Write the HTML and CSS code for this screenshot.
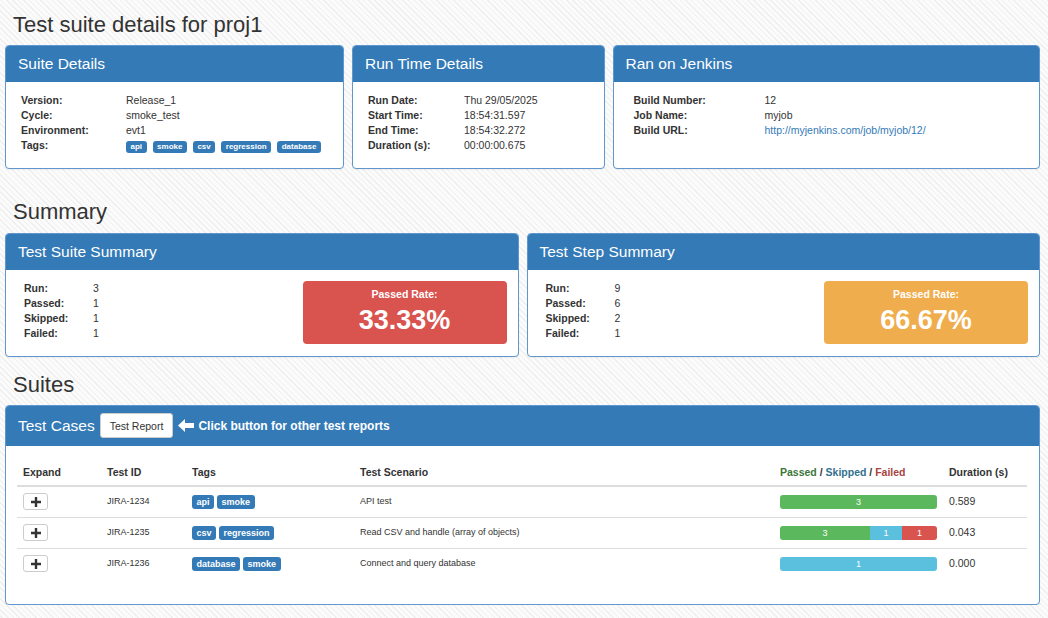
FILE: index.html
```html
<!DOCTYPE html>
<html lang="en">
<head>
<meta charset="utf-8">
<title>Test suite details for proj1</title>
<link rel="stylesheet" href="styles.css">
</head>
<body>
<div class="page">
  <h1 class="page-title">Test suite details for proj1</h1>

  <div class="row">
    <section class="panel panel-suite">
      <div class="panel-heading"><h2 class="panel-title">Suite Details</h2></div>
      <div class="panel-body body-suite">
        <dl class="info info-suite">
          <dt>Version:</dt><dd>Release_1</dd>
          <dt>Cycle:</dt><dd>smoke_test</dd>
          <dt>Environment:</dt><dd>evt1</dd>
          <dt>Tags:</dt>
          <dd class="tags tags-suite">
            <span class="tag tag-xs">api</span>
            <span class="tag tag-xs">smoke</span>
            <span class="tag tag-xs">csv</span>
            <span class="tag tag-xs">regression</span>
            <span class="tag tag-xs">database</span>
          </dd>
        </dl>
      </div>
    </section>

    <section class="panel panel-runtime">
      <div class="panel-heading"><h2 class="panel-title">Run Time Details</h2></div>
      <div class="panel-body body-runtime">
        <dl class="info info-runtime">
          <dt>Run Date:</dt><dd>Thu 29/05/2025</dd>
          <dt>Start Time:</dt><dd>18:54:31.597</dd>
          <dt>End Time:</dt><dd>18:54:32.272</dd>
          <dt>Duration (s):</dt><dd>00:00:00.675</dd>
        </dl>
      </div>
    </section>

    <section class="panel panel-jenkins">
      <div class="panel-heading"><h2 class="panel-title">Ran on Jenkins</h2></div>
      <div class="panel-body body-jenkins">
        <dl class="info info-jenkins">
          <dt>Build Number:</dt><dd>12</dd>
          <dt>Job Name:</dt><dd>myjob</dd>
          <dt>Build URL:</dt><dd><a class="link" href="#">http://myjenkins.com/job/myjob/12/</a></dd>
        </dl>
      </div>
    </section>
  </div>

  <h1 class="section-title title-summary">Summary</h1>

  <div class="row">
    <section class="panel panel-half">
      <div class="panel-heading"><h2 class="panel-title">Test Suite Summary</h2></div>
      <div class="summary-body">
        <dl class="info stats">
          <dt>Run:</dt><dd>3</dd>
          <dt>Passed:</dt><dd>1</dd>
          <dt>Skipped:</dt><dd>1</dd>
          <dt>Failed:</dt><dd>1</dd>
        </dl>
        <div class="rate rate-danger">
          <div class="rate-label">Passed Rate:</div>
          <div class="rate-value">33.33%</div>
        </div>
      </div>
    </section>

    <section class="panel panel-half">
      <div class="panel-heading"><h2 class="panel-title">Test Step Summary</h2></div>
      <div class="summary-body">
        <dl class="info stats">
          <dt>Run:</dt><dd>9</dd>
          <dt>Passed:</dt><dd>6</dd>
          <dt>Skipped:</dt><dd>2</dd>
          <dt>Failed:</dt><dd>1</dd>
        </dl>
        <div class="rate rate-warning">
          <div class="rate-label">Passed Rate:</div>
          <div class="rate-value">66.67%</div>
        </div>
      </div>
    </section>
  </div>

  <h1 class="section-title title-suites">Suites</h1>

  <section class="panel">
    <div class="panel-heading cases-heading">
      <h2 class="panel-title">Test Cases</h2>
      <button class="btn-report" type="button">Test Report</button>
      <svg class="arrow-icon" width="16" height="13" viewBox="0 0 16 13" aria-hidden="true"><path d="M0 6.5 L7 0 V4 H16 V9 H7 V13 Z" fill="#fff"/></svg>
      <span class="hint">Click button for other test reports</span>
    </div>
    <div class="cases-body">
      <table class="cases">
        <colgroup>
          <col class="c-expand"><col class="c-id"><col class="c-tags"><col class="c-scenario"><col class="c-result"><col class="c-duration">
        </colgroup>
        <thead>
          <tr>
            <th>Expand</th>
            <th>Test ID</th>
            <th>Tags</th>
            <th>Test Scenario</th>
            <th><span class="t-pass">Passed</span> / <span class="t-skip">Skipped</span> / <span class="t-fail">Failed</span></th>
            <th>Duration (s)</th>
          </tr>
        </thead>
        <tbody>
          <tr>
            <td><button class="expand-btn" type="button" aria-label="Expand"><svg width="10" height="10" viewBox="0 0 10 10"><path d="M3.8 0h2.4v3.8H10v2.4H6.2V10H3.8V6.2H0V3.8h3.8z" fill="#333"/></svg></button></td>
            <td class="small">JIRA-1234</td>
            <td><div class="tags tags-row"><span class="tag tag-sm">api</span><span class="tag tag-sm">smoke</span></div></td>
            <td class="small">API test</td>
            <td><div class="progress"><div class="bar bar-pass" style="width:100%">3</div></div></td>
            <td>0.589</td>
          </tr>
          <tr>
            <td><button class="expand-btn" type="button" aria-label="Expand"><svg width="10" height="10" viewBox="0 0 10 10"><path d="M3.8 0h2.4v3.8H10v2.4H6.2V10H3.8V6.2H0V3.8h3.8z" fill="#333"/></svg></button></td>
            <td class="small">JIRA-1235</td>
            <td><div class="tags tags-row"><span class="tag tag-sm">csv</span><span class="tag tag-sm">regression</span></div></td>
            <td class="small">Read CSV and handle (array of objects)</td>
            <td><div class="progress"><div class="bar bar-pass" style="width:57.3%">3</div><div class="bar bar-skip" style="width:20.4%">1</div><div class="bar bar-fail" style="width:22.3%">1</div></div></td>
            <td>0.043</td>
          </tr>
          <tr>
            <td><button class="expand-btn" type="button" aria-label="Expand"><svg width="10" height="10" viewBox="0 0 10 10"><path d="M3.8 0h2.4v3.8H10v2.4H6.2V10H3.8V6.2H0V3.8h3.8z" fill="#333"/></svg></button></td>
            <td class="small">JIRA-1236</td>
            <td><div class="tags tags-row"><span class="tag tag-sm">database</span><span class="tag tag-sm">smoke</span></div></td>
            <td class="small">Connect and query database</td>
            <td><div class="progress"><div class="bar bar-skip" style="width:100%">1</div></div></td>
            <td>0.000</td>
          </tr>
        </tbody>
      </table>
    </div>
  </section>
</div>
</body>
</html>
```

FILE: styles.css
```css
html, body {
  margin: 0;
  padding: 0;
}

body {
  font-family: "Liberation Sans", Arial, Helvetica, sans-serif;
  font-size: 10.5px;
  color: #333;
  background-color: #f9f9f9;
  background-image: repeating-linear-gradient(45deg, #efefef 0, #efefef 1px, #fbfbfb 1px, #fbfbfb 4px);
}

.page {
  padding: 0 8px 0 5px;
}

.page-title,
.section-title {
  font-size: 22px;
  font-weight: 400;
  line-height: 26px;
  margin: 12px 0 7px 8px;
  color: #333;
}

.title-summary {
  margin: 30px 0 8px 8px;
}

.title-suites {
  margin: 15px 0 7px 8px;
}

.row {
  display: flex;
  gap: 8px;
}

.panel {
  background: #fff;
  border: 1px solid #5f97ce;
  border-radius: 4px;
  overflow: hidden;
  box-shadow: 0 1px 1px rgba(0, 0, 0, 0.05);
}

.panel-suite { flex: 339 1 0; }
.panel-runtime { flex: 252 1 0; }
.panel-jenkins { flex: 428 1 0; }
.panel-half { flex: 1 1 0; }

.panel-heading {
  background: #337ab7;
  color: #fff;
  padding: 9px 12px;
}

.panel-title {
  margin: 0;
  font-size: 15.5px;
  font-weight: 400;
  line-height: 18px;
}

.panel-body {
  padding: 11px 15px 15px;
}

.body-jenkins {
  padding-left: 20px;
}

.info {
  display: grid;
  margin: 0;
  line-height: 15px;
}

.info dt {
  font-weight: bold;
}

.info dd {
  margin: 0;
}

.info-suite { grid-template-columns: 105px 1fr; }
.info-runtime { grid-template-columns: 96px 1fr; }
.info-jenkins { grid-template-columns: 131px 1fr; }

.link {
  color: #337ab7;
  text-decoration: none;
}

.tags {
  display: flex;
  align-items: center;
}

.tags-suite {
  gap: 6px;
  padding-top: 2px;
}

.tags-row {
  gap: 3px;
}

.tag {
  background: #337ab7;
  color: #fff;
  font-weight: bold;
  border-radius: 3px;
  padding: 0 4.5px;
}

.tag-xs {
  font-size: 8px;
  line-height: 12px;
}

.tag-sm {
  font-size: 9px;
  line-height: 14px;
}

.summary-body {
  display: flex;
  justify-content: space-between;
  align-items: flex-start;
  padding: 11px 11px 12px 18px;
}

.stats {
  grid-template-columns: 69px 20px;
}

.rate {
  width: 204px;
  height: 63px;
  box-sizing: border-box;
  border-radius: 4px;
  color: #fff;
  text-align: center;
  padding-top: 6px;
}

.rate-danger { background: #d9534f; }
.rate-warning { background: #f0ad4e; }

.rate-label {
  font-weight: bold;
  line-height: 14px;
}

.rate-value {
  font-weight: bold;
  font-size: 27px;
  line-height: 38px;
}

.cases-heading {
  display: flex;
  align-items: center;
  padding: 7px 12px 8px;
}

.btn-report {
  margin-left: 5px;
  height: 25px;
  padding: 0 9px;
  background: #fff;
  border: 1px solid #ccc;
  border-radius: 3px;
  font-family: inherit;
  font-size: 10.5px;
  color: #333;
}

.arrow-icon {
  margin-left: 5px;
  display: block;
}

.hint {
  margin-left: 4px;
  font-size: 12px;
  font-weight: bold;
}

.cases-body {
  padding: 11px 12px 25px 11px;
}

.cases {
  width: 1010px;
  table-layout: fixed;
  border-collapse: separate;
  border-spacing: 0;
}

.c-expand { width: 84px; }
.c-id { width: 85px; }
.c-tags { width: 168px; }
.c-scenario { width: 420px; }
.c-result { width: 169px; }
.c-duration { width: 84px; }

.cases th {
  text-align: left;
  font-weight: bold;
  padding: 8px 6px 5px;
  line-height: 15px;
  border-bottom: 2px solid #ddd;
}

.cases td {
  padding: 6px 6px 7px;
  line-height: 15px;
  vertical-align: middle;
  border-top: 1px solid #ddd;
}

.cases tbody tr:first-child td {
  border-top: 0;
}

.cases td.small {
  font-size: 9px;
}

.t-pass { color: #3c763d; }
.t-skip { color: #31708f; }
.t-fail { color: #a94442; }

.expand-btn {
  display: flex;
  align-items: center;
  justify-content: center;
  width: 25px;
  height: 17px;
  box-sizing: border-box;
  padding: 0;
  background: #fff;
  border: 1px solid #ccc;
  border-radius: 3px;
}

.progress {
  display: flex;
  height: 14px;
  border-radius: 3px;
  overflow: hidden;
  background: #f5f5f5;
  font-size: 9px;
  line-height: 14px;
  color: #fff;
  text-align: center;
}

.bar-pass { background: #5cb85c; }
.bar-skip { background: #5bc0de; }
.bar-fail { background: #d9534f; }
```
